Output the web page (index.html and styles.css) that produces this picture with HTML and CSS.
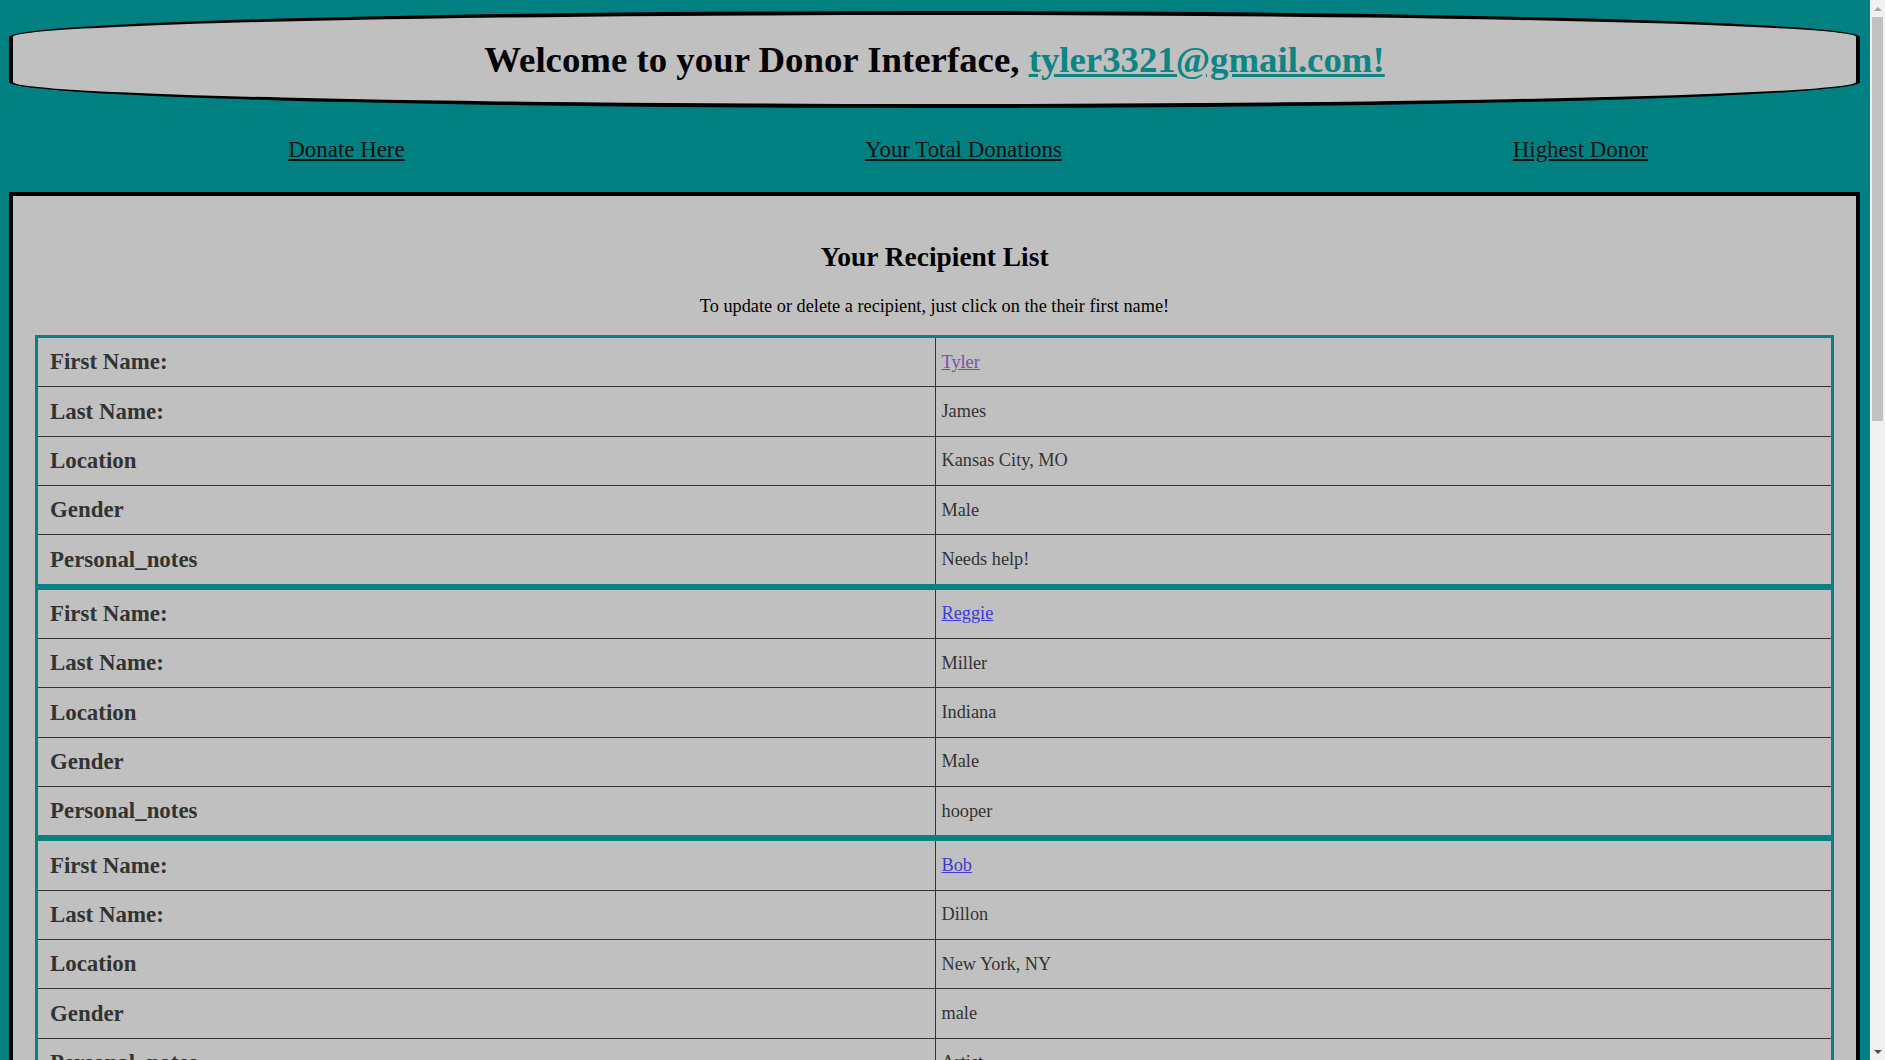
FILE: index.html
```html
<!DOCTYPE html>
<html lang="en">
<head>
<meta charset="utf-8">
<title>Donor Interface</title>
<link rel="stylesheet" href="styles.css">
</head>
<body>
<div class="page">
  <header class="banner">
    <h1 class="title">Welcome to your Donor Interface, <a href="#" class="email">tyler3321@gmail.com!</a></h1>
  </header>
  <nav class="nav">
    <a href="#">Donate Here</a>
    <a href="#">Your Total Donations</a>
    <a href="#">Highest Donor</a>
  </nav>
  <main class="panel">
    <h2 class="panel-title">Your Recipient List</h2>
    <p class="panel-note">To update or delete a recipient, just click on the their first name!</p>

    <table class="recipient">
      <tr><th>First Name:</th><td><a href="#" class="name visited">Tyler</a></td></tr>
      <tr><th>Last Name:</th><td>James</td></tr>
      <tr><th>Location</th><td>Kansas City, MO</td></tr>
      <tr><th>Gender</th><td>Male</td></tr>
      <tr><th>Personal_notes</th><td>Needs help!</td></tr>
    </table>

    <table class="recipient">
      <tr><th>First Name:</th><td><a href="#" class="name">Reggie</a></td></tr>
      <tr><th>Last Name:</th><td>Miller</td></tr>
      <tr><th>Location</th><td>Indiana</td></tr>
      <tr><th>Gender</th><td>Male</td></tr>
      <tr><th>Personal_notes</th><td>hooper</td></tr>
    </table>

    <table class="recipient">
      <tr><th>First Name:</th><td><a href="#" class="name">Bob</a></td></tr>
      <tr><th>Last Name:</th><td>Dillon</td></tr>
      <tr><th>Location</th><td>New York, NY</td></tr>
      <tr><th>Gender</th><td>male</td></tr>
      <tr><th>Personal_notes</th><td>Artist</td></tr>
    </table>
  </main>
</div>
<div class="scrollbar" aria-hidden="true">
  <div class="sb-btn"><span class="sb-arrow up"></span></div>
  <div class="sb-thumb"></div>
  <div class="sb-track"></div>
  <div class="sb-btn"><span class="sb-arrow down"></span></div>
</div>
</body>
</html>
```

FILE: styles.css
```css
html, body {
  margin: 0;
  height: 100%;
}

body {
  display: flex;
  overflow: hidden;
  background: #008080;
  font-family: "Liberation Serif", "Times New Roman", serif;
  font-size: 18.3px;
  color: #000;
}

.page {
  flex: 1;
  min-width: 0;
  padding: 10.5px 10px 0 9px;
  overflow: hidden;
}

.banner {
  background: #c0c0c0;
  border: 4px solid #000;
  border-radius: 50% / 26px;
  text-align: center;
}

.title {
  margin: 0;
  padding: 23.3px 0;
  font-size: 36.8px;
  font-weight: bold;
  line-height: normal;
}

.email {
  color: #0d8585;
}

.nav {
  display: grid;
  grid-template-columns: repeat(3, 617px);
  align-items: center;
  height: 84px;
  margin-left: 29px;
}

.nav a {
  justify-self: center;
  font-size: 22.9px;
  color: #111;
}

.panel {
  background: #c0c0c0;
  border: 4px solid #000;
  padding: 23px 22px 40px;
}

.panel-title {
  margin: 22.8px 0;
  font-size: 27.45px;
  text-align: center;
}

.panel-note {
  margin: 18.3px 0;
  text-align: center;
}

.recipient {
  width: 100%;
  table-layout: fixed;
  border: 3px solid #0a8080;
  border-spacing: 0;
}

.recipient th,
.recipient td {
  height: 48.35px;
  padding: 0;
  vertical-align: middle;
  color: #333;
  text-align: left;
}

.recipient th {
  padding-left: 12px;
  font-size: 22.9px;
  font-weight: bold;
}

.recipient td {
  padding-left: 6px;
  border-left: 1px solid #333;
}

.recipient tr + tr th,
.recipient tr + tr td {
  border-top: 1px solid #333;
}

.name {
  color: #3b3bdb;
}

.name.visited {
  color: #7652ac;
}

.scrollbar {
  flex: none;
  width: 15px;
  display: flex;
  flex-direction: column;
  background: #f1f1f1;
}

.sb-btn {
  height: 17px;
  display: flex;
  align-items: center;
  justify-content: center;
}

.sb-arrow {
  width: 0;
  height: 0;
  border-left: 4px solid transparent;
  border-right: 4px solid transparent;
}

.sb-arrow.up {
  border-bottom: 4px solid #a3a3a3;
}

.sb-arrow.down {
  border-top: 4px solid #505050;
}

.sb-thumb {
  height: 404px;
  margin: 0 2px;
  background: #c1c1c1;
}

.sb-track {
  flex: 1;
}
```
